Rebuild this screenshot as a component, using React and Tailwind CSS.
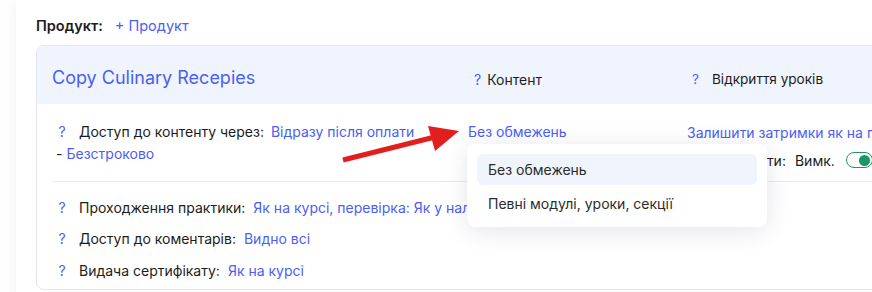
export default function App() {
  const q = "text-[#4b5ef5]";
  const link = "text-[#4b5ef5]";
  return (
    <div className="w-[872px] h-[292px] overflow-hidden bg-white relative" style={{ fontFamily: "Inter, 'Noto Sans', sans-serif" }}>
      <div className="ml-[16px] w-[900px] h-[320px] bg-white shadow-[0_0_14px_rgba(30,40,80,0.07)] pl-[20px] pt-[15px]">
        <div className="flex items-center h-[22px] text-[14.5px]">
          <span className="font-semibold text-[#1c1c1c]">Продукт:</span>
          <span className={`ml-[12px] ${link}`}>+ Продукт</span>
        </div>
        <div className="mt-[8px] w-[900px] border border-[#e3e6ee] rounded-lg overflow-hidden text-[14px] text-[#1c1c1c]">
          <div className="h-[58px] bg-[#f0f4fe] flex">
            <div className="w-[430px] pl-[15px] pt-[18px] text-[18px] text-[#4b5ef5]">Copy Culinary Recepies</div>
            <div className="w-[219px] pl-[7px] pt-[23px] flex">
              <span className={q}>?</span>
              <span className="ml-[6px]">Контент</span>
            </div>
            <div className="pl-[6px] pt-[23px] flex text-[13.6px]">
              <span className={q}>?</span>
              <span className="ml-[13px]">Відкриття уроків</span>
            </div>
          </div>
          <div className="pl-[15px] pt-[16px] pb-[8px]">
            <div className="flex">
              <div className="w-[416px]">
                <div className="flex items-center h-[22px]">
                  <span className={`w-[20px] text-center ${q}`}>?</span>
                  <span className="ml-[7px]">Доступ до контенту через:</span>
                  <span className={`ml-[7px] ${link}`}>Відразу після оплати</span>
                </div>
                <div className="flex items-center h-[22px] pl-[4px]">
                  <span>-</span>
                  <span className={`ml-[4px] ${link}`}>Безстроково</span>
                </div>
              </div>
              <div className="w-[219px]">
                <div className="flex items-center h-[22px]">
                  <span className={link}>Без обмежень</span>
                </div>
              </div>
              <div>
                <div className="flex items-center h-[22px] mt-[1px] whitespace-nowrap">
                  <span className={link}>Залишити затримки як на продукті</span>
                </div>
                <div className="flex items-center h-[22px] mt-[6px] pl-[6px] whitespace-nowrap">
                  <span>Повідомляти:</span>
                  <span className="ml-[9px]">Вимк.</span>
                  <span className="ml-[11px] w-[27px] h-[16px] rounded-full border-[1.5px] border-[#199866] bg-white flex items-center justify-end pr-[2px]">
                    <span className="w-[11px] h-[11px] rounded-full bg-[#199866]"></span>
                  </span>
                </div>
              </div>
            </div>
            <div className="mt-[10px] border-t border-[#e8eaef]"></div>
            <div className="flex items-center h-[22px] mt-[14px] whitespace-nowrap">
              <span className={`w-[20px] text-center ${q}`}>?</span>
              <span className="ml-[7px]">Проходження практики:</span>
              <span className={`ml-[8px] ${link}`}>Як на курсі, перевірка: Як у налаштуваннях</span>
            </div>
            <div className="flex items-center h-[22px] mt-[9px]">
              <span className={`w-[20px] text-center ${q}`}>?</span>
              <span className="ml-[7px]">Доступ до коментарів:</span>
              <span className={`ml-[8px] ${link}`}>Видно всі</span>
            </div>
            <div className="flex items-center h-[22px] mt-[10px]">
              <span className={`w-[20px] text-center ${q}`}>?</span>
              <span className="ml-[7px]">Видача сертифікату:</span>
              <span className={`ml-[8px] ${link}`}>Як на курсі</span>
            </div>
          </div>
        </div>
      </div>

      <div className="absolute left-[467px] top-[144px] w-[300px] bg-white rounded-lg shadow-[0_4px_24px_rgba(30,40,80,0.12)] p-[10px] pb-[8px] text-[14px] text-[#2b2b2b]">
        <div className="h-[31px] rounded-md bg-[#f0f4fd] flex items-center pl-[11px]">Без обмежень</div>
        <div className="h-[31px] mt-[3px] rounded-md flex items-center pl-[11px]">Певні модулі, уроки, секції</div>
      </div>

      <svg className="absolute left-0 top-0" width="872" height="292" viewBox="0 0 872 292">
        <line x1="343" y1="160" x2="433" y2="137.5" stroke="#e21f1f" strokeWidth="5" />
        <polygon points="459,131 428,126 435,151" fill="#e21f1f" />
      </svg>
    </div>
  );
}
